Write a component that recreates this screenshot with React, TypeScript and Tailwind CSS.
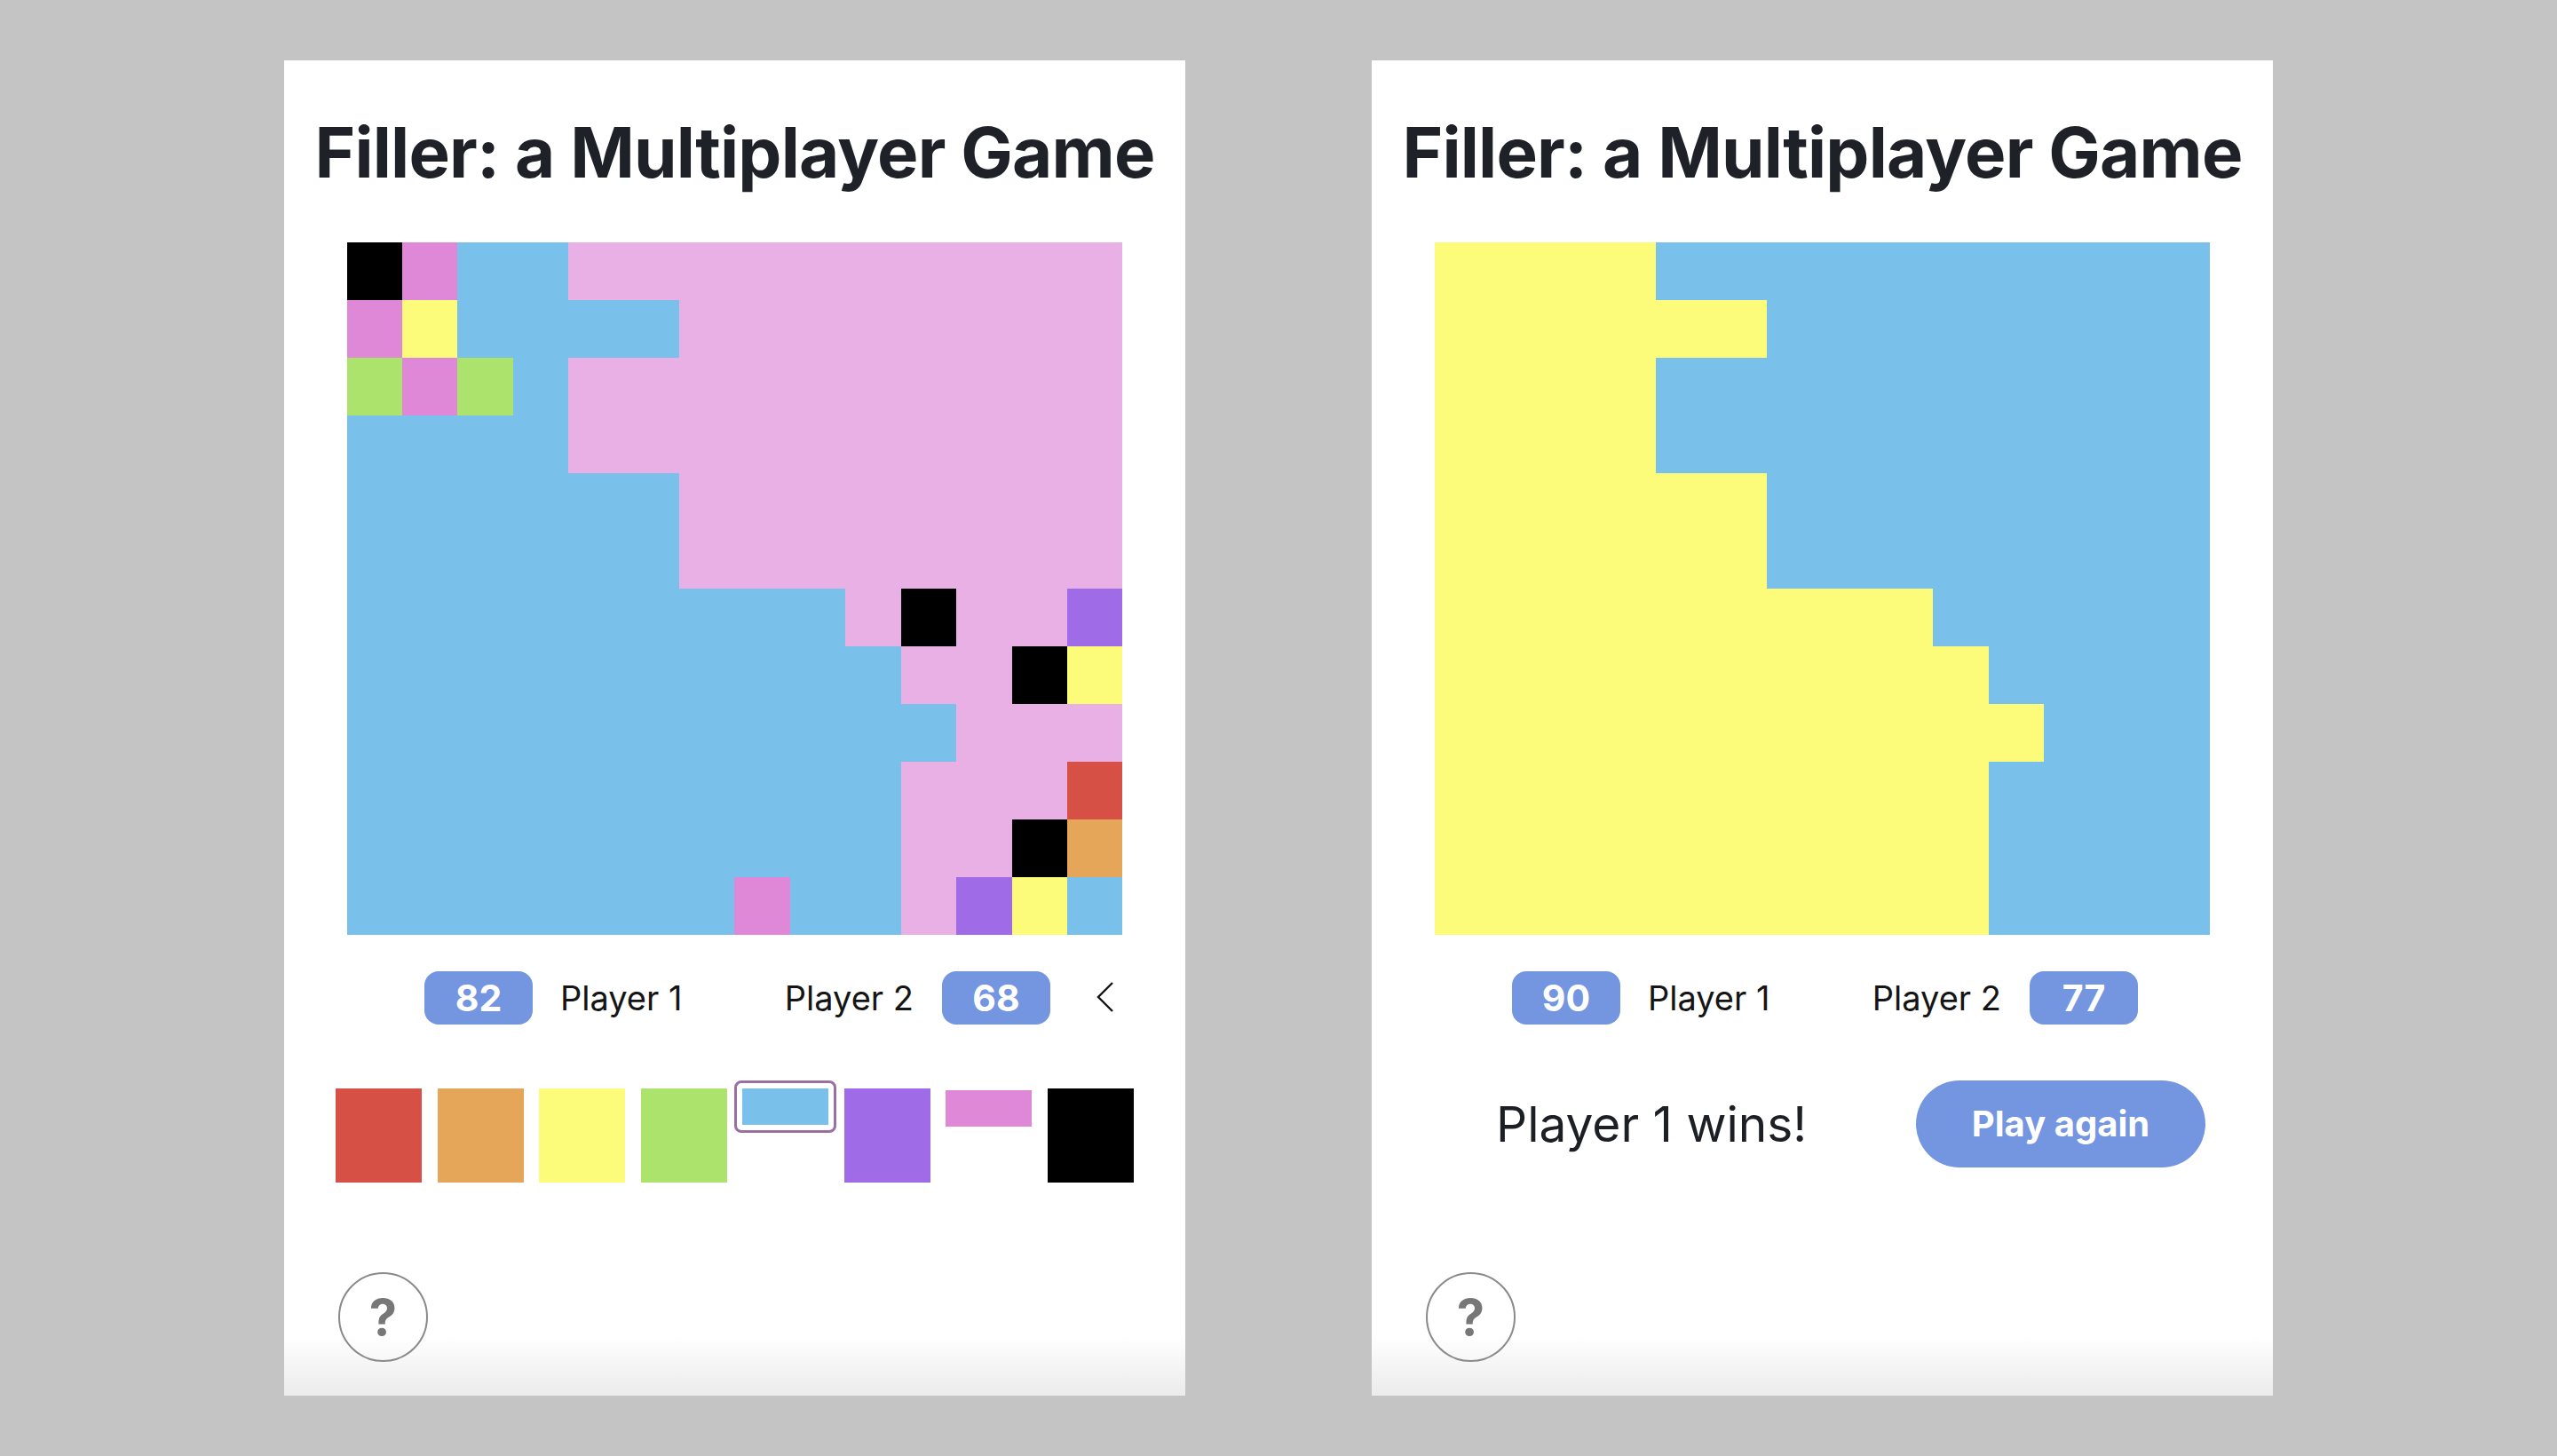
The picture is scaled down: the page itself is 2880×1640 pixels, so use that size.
import React from "react"

// cell colour keys used by both boards
const CELL: Record<string, string> = {
  R: "bg-[#d75045]",
  O: "bg-[#e5a65a]",
  Y: "bg-[#fdfc7a]",
  G: "bg-[#abe36d]",
  B: "bg-[#79c0eb]",
  P: "bg-[#9f6be7]",
  M: "bg-[#e088d8]",
  K: "bg-black",
  L: "bg-[#e9b0e5]",
}

const leftBoard = [
  "KMBBLLLLLLLLLL",
  "MYBBBBLLLLLLLL",
  "GMGBLLLLLLLLLL",
  "BBBBLLLLLLLLLL",
  "BBBBBBLLLLLLLL",
  "BBBBBBLLLLLLLL",
  "BBBBBBBBBLKLLP",
  "BBBBBBBBBBLLKY",
  "BBBBBBBBBBBLLL",
  "BBBBBBBBBBLLLR",
  "BBBBBBBBBBLLKO",
  "BBBBBBBMBBLPYB",
]

const rightBoard = [4, 6, 4, 4, 6, 6, 9, 10, 11, 10, 10, 10].map(
  (n) => "Y".repeat(n) + "B".repeat(14 - n)
)

const swatches = [
  { key: "R", short: false, selected: false },
  { key: "O", short: false, selected: false },
  { key: "Y", short: false, selected: false },
  { key: "G", short: false, selected: false },
  { key: "B", short: true, selected: true },
  { key: "P", short: false, selected: false },
  { key: "M", short: true, selected: false },
  { key: "K", short: false, selected: false },
]

function Board({ rows }: { rows: string[] }) {
  return (
    <div className="mt-[62px] w-[874px] h-[780px] grid grid-cols-[repeat(14,1fr)] grid-rows-[repeat(12,1fr)]">
      {rows.map((row, r) =>
        row.split("").map((c, i) => <div key={`${r}-${i}`} className={CELL[c]} />)
      )}
    </div>
  )
}

function Badge({ value }: { value: number }) {
  return (
    <div className="shrink-0 w-[122px] h-[60px] rounded-[16px] bg-[#7495e0] flex items-center justify-center text-white text-[41px] font-bold leading-none">
      {value}
    </div>
  )
}

function ScoreRow({ p1, p2, showBack }: { p1: number; p2: number; showBack?: boolean }) {
  return (
    <div className="relative mt-[41px] w-full h-[60px] flex justify-between items-center pl-[158px] pr-[152px]">
      <div className="flex items-center gap-[31px]">
        <Badge value={p1} />
        <span className="whitespace-nowrap text-[38px] leading-none text-[#151515]">Player 1</span>
      </div>
      <div className="flex items-center gap-[32px]">
        <span className="whitespace-nowrap text-[38px] leading-none text-[#151515]">Player 2</span>
        <Badge value={p2} />
      </div>
      {showBack && (
        <svg className="absolute left-[913px] top-[11px]" width="24" height="36" viewBox="0 0 24 36" fill="none">
          <polyline points="20,2 4,18 20,34" stroke="#141414" strokeWidth="2.4" strokeLinejoin="miter" />
        </svg>
      )}
    </div>
  )
}

function Palette() {
  return (
    <div className="mt-[72px] flex items-start gap-[17.5px]">
      {swatches.map((s) =>
        s.selected ? (
          <div key={s.key} className="-m-[9px] mx-[-9px] p-[6px] border-[3px] border-[#9a6fa2] rounded-[8px]">
            <div className={`w-[97px] h-[41px] ${CELL[s.key]}`} />
          </div>
        ) : (
          <div
            key={s.key}
            className={`w-[97px] ${s.short ? "h-[41px] mt-[2px]" : "h-[106px]"} ${CELL[s.key]}`}
          />
        )
      )}
    </div>
  )
}

function HelpButton() {
  return (
    <button
      type="button"
      className="mt-auto mb-[38px] ml-[61px] self-start w-[101px] h-[101px] rounded-full border-[2px] border-[#8a8a8a] flex items-center justify-center text-[56px] font-bold leading-none text-[#777777]"
    >
      ?
    </button>
  )
}

function Card({ children }: { children: React.ReactNode }) {
  return (
    <div className="w-[1015px] h-[1504px] flex flex-col items-center bg-[linear-gradient(180deg,#ffffff_95.5%,#ebebeb_100%)]">
      <h1 className="mt-[65px] text-[78px] leading-none font-bold text-[#1e2228] tracking-[-0.8px]">
        Filler: a Multiplayer Game
      </h1>
      {children}
      <HelpButton />
    </div>
  )
}

export default function App() {
  return (
    <div className="min-h-screen w-full bg-[#c4c4c4] flex justify-center gap-[210px] pt-[68px] font-['Inter','Noto_Sans',sans-serif]">
      <Card>
        <Board rows={leftBoard} />
        <ScoreRow p1={82} p2={68} showBack />
        <Palette />
      </Card>
      <Card>
        <Board rows={rightBoard} />
        <ScoreRow p1={90} p2={77} />
        <div className="mt-[63px] w-full h-[98px] flex items-center">
          <span className="ml-[140px] text-[55px] leading-none text-[#1c1f24]">Player 1 wins!</span>
          <button
            type="button"
            className="ml-auto mr-[76px] w-[326px] h-[98px] rounded-full bg-[#7495e0] text-white text-[40px] font-bold leading-none"
          >
            Play again
          </button>
        </div>
      </Card>
    </div>
  )
}
